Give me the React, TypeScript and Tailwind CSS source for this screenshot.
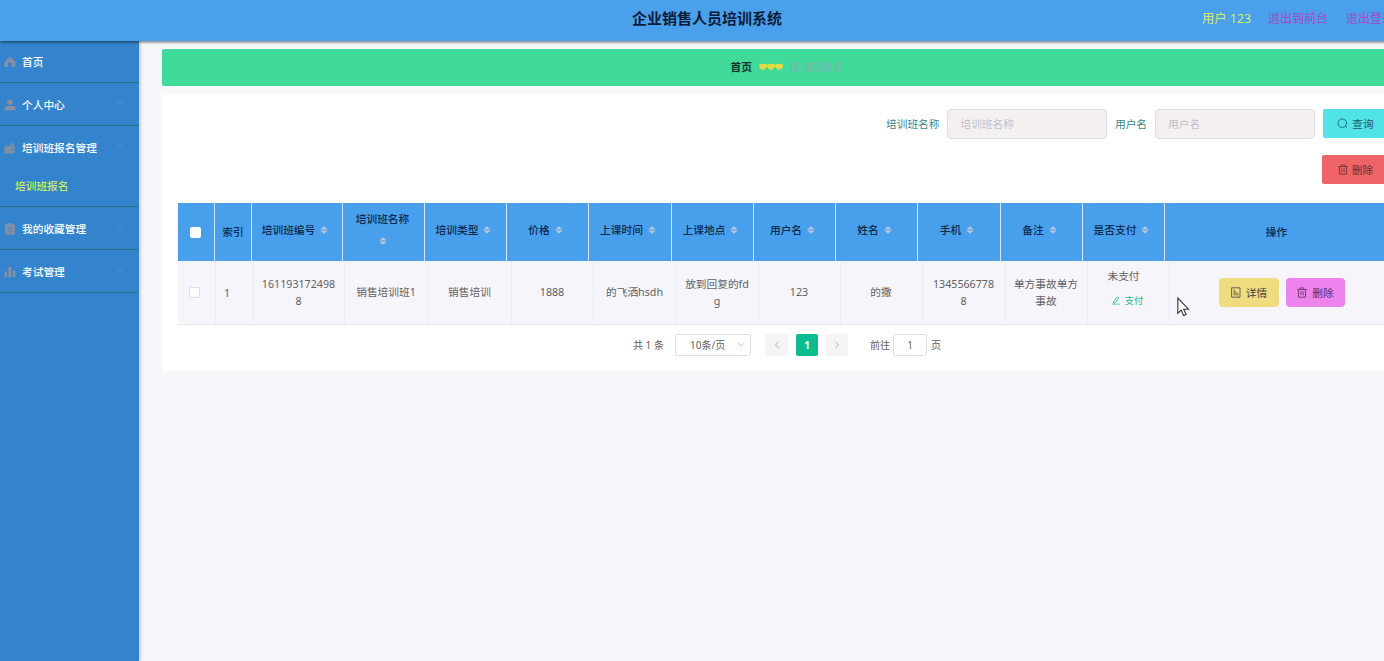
import type { ReactNode } from "react";
import clsx from "clsx";

const svgBase = { fill: "none", stroke: "currentColor", strokeLinecap: "round", strokeLinejoin: "round" } as const;

function HomeIcon() {
    return (
        <svg width="12" height="12" viewBox="0 0 12 12" fill="currentColor">
            <path d="M6 .8 11.5 6v4.2c0 .5-.3.8-.8.8H8V8.2C8 7 7.200 6.300 6 6.300S4 7 4 8.200V11H1.300c-.5 0-.8-.3-.8-.8V6z" />
        </svg>
    );
}

function UserIcon() {
    return (
        <svg width="12" height="12" viewBox="0 0 12 12" fill="currentColor">
            <circle cx="6" cy="3.200" r="2.700" />
            <path d="M.6 11.200V9.600c0-1.600 1.200-2.500 2.600-2.500h5.600c1.400 0 2.600.9 2.600 2.500v1.600z" />
        </svg>
    );
}

function WalletIcon() {
    return (
        <svg width="12" height="12" viewBox="0 0 12 12" fill="currentColor">
            <path d="M4.500 3.600 9.300.8l1.200 2.100-1.300.7zM.5 4.200h10.200v2.200H8.400a1.200 1.200 0 0 0 0 2.400h2.300v2.500H.5z" />
            <rect x="8.400" y="7" width="2.800" height="1.200" />
        </svg>
    );
}

function OrderIcon() {
    return (
        <svg width="12" height="12" viewBox="0 0 12 12">
            <path d="M1.200 1.300h9.600v10.500H1.200z" fill="currentColor" />
            <path d="M4 .3h4v2H4z" fill="currentColor" />
            <path d="M3.500 4.800h5M3.500 6.800h5M3.500 8.800h5" stroke="#3384cc" strokeWidth=".6" />
        </svg>
    );
}

function BarsIcon() {
    return (
        <svg width="12" height="12" viewBox="0 0 12 12" fill="currentColor">
            <path d="M.5 5.500h2.600V11H.5zM4.500 1h2.800v10H4.500zM8.700 4h2.600v7H8.700z" />
        </svg>
    );
}

function Chevron({ dir, size = 8 }: { dir: "up" | "down" | "left" | "right"; size?: number }) {
    const paths = {
        up: "M1.500 5.500l2.500-2.500 2.500 2.500",
        down: "M1.500 2.500l2.500 2.500 2.500-2.500",
        left: "M5.500 1l-3 3 3 3",
        right: "M2.500 1l3 3-3 3",
    };
    return (
        <svg width={size} height={size} viewBox="0 0 8 8" strokeWidth="0.9" {...svgBase}>
            <path d={paths[dir]} />
        </svg>
    );
}

function SearchIcon() {
    return (
        <svg width="11" height="11" viewBox="0 0 11 11" strokeWidth=".8" {...svgBase}>
            <circle cx="5.300" cy="5.200" r="4.300" />
            <path d="M8.400 8.400l1.300 1.200" />
        </svg>
    );
}

function TrashIcon() {
    return (
        <svg width="10" height="11" viewBox="0 0 10 11" strokeWidth=".8" {...svgBase}>
            <path d="M.7 2.500h8.600M3.200 2.300V.9h3.600v1.400M1.500 2.700v7.500h7V2.700M3.900 4.700v3.200M6.100 4.700v3.200" />
        </svg>
    );
}

function DetailIcon() {
    return (
        <svg width="10" height="11" viewBox="0 0 10 11" strokeWidth=".8" {...svgBase}>
            <path d="M1 .8h8v9.400H1zM3.200 3v5M5 5v3M6.800 6.500V8" />
        </svg>
    );
}

function EditIcon() {
    return (
        <svg width="9" height="9" viewBox="0 0 9 9" strokeWidth=".8" {...svgBase}>
            <path d="M2 5.300 5.200 1l1.600 1.200L3.600 6.600 1.800 7.200zM1 8.200h3M5.500 8.200h2" />
        </svg>
    );
}

function SortIcon() {
    return (
        <svg width="8" height="8" viewBox="0 0 8 8" fill="#b9c8da">
            <path d="M4 .2 7.700 3.600H.3zM4 7.800.3 4.400h7.400z" />
        </svg>
    );
}

function Hearts() {
    return (
        <svg width="24" height="8" viewBox="0 0 24 8" fill="#e6da40">
            {[0, 8, 16].map((x) => (
                <path key={x} transform={`translate(${x} 0)`} d="M4 7.200C2 6 0 4.600 0 2.700 0 .5 3 .3 4 1.500 5 .3 8 .5 8 2.700 8 4.600 6 6 4 7.200z" />
            ))}
        </svg>
    );
}

const menu: { label: string; icon: ReactNode; arrow?: "up" | "down"; children?: string[] }[] = [
    { label: "首页", icon: <HomeIcon /> },
    { label: "个人中心", icon: <UserIcon />, arrow: "down" },
    { label: "培训班报名管理", icon: <WalletIcon />, arrow: "up", children: ["培训班报名"] },
    { label: "我的收藏管理", icon: <OrderIcon />, arrow: "down" },
    { label: "考试管理", icon: <BarsIcon />, arrow: "down" },
];

const columns = [
    "培训班编号",
    "培训班名称",
    "培训类型",
    "价格",
    "上课时间",
    "上课地点",
    "用户名",
    "姓名",
    "手机",
    "备注",
    "是否支付",
];

const cells = [
    ["161193172498", "8"],
    ["销售培训班1"],
    ["销售培训"],
    ["1888"],
    ["的飞洒hsdh"],
    ["放到回复的fd", "g"],
    ["123"],
    ["的撒"],
    ["1345566778", "8"],
    ["单方事故单方", "事故"],
];

function Sidebar() {
    return (
        <aside className="w-[139px] shrink-0 bg-[#3384cc] shadow-[1px_0_4px_rgba(0,0,0,0.25)]">
            {menu.map((item, idx) => (
                <div key={item.label} className="border-b border-[#2b7186]">
                    <div
                        className={clsx(
                            "flex items-center pl-1 pr-[15px] text-white font-medium",
                            idx === 0 ? "h-[41px]" : "h-[42px] pt-px"
                        )}
                    >
                        <span className="mr-1.5 text-[#8790a0]">{item.icon}</span>
                        <span className="flex-1">{item.label}</span>
                        {item.arrow && (
                            <span className="pb-1 text-[#5f93c4]">
                                <Chevron dir={item.arrow} />
                            </span>
                        )}
                    </div>
                    {item.children?.map((child) => (
                        <div key={child} className="flex h-[38px] items-center pl-[15px] pb-0.5 font-medium text-[#cdec5c]">
                            {child}
                        </div>
                    ))}
                </div>
            ))}
        </aside>
    );
}

function Field({ label }: { label: string }) {
    return (
        <label className="flex items-center gap-2 text-[#3c8585]">
            {label}
            <input
                placeholder={label}
                className="h-[30px] w-[160px] rounded border border-[#e0e0e8] bg-[#f5f0f0] px-3 placeholder:text-[#bfbfca]"
            />
        </label>
    );
}

function DataTable() {
    return (
        <div className="mt-[19px] w-[1218px]">
            <div className="grid h-[58px] grid-cols-[37px_37px_91px_82px_82px_82px_83px_82px_82px_82px_83px_82px_82px_223px] bg-[#489feb] font-medium text-[#0c2a4c]">
                <div className="flex items-center justify-center border-r border-[#d5e6f7] pr-0.5">
                    <span className="h-[11px] w-[11px] rounded-xs bg-white" />
                </div>
                <div className="flex items-center justify-center border-r border-[#d5e6f7]">索引</div>
                {columns.map((col) => (
                    <div
                        key={col}
                        className="flex flex-wrap content-center items-center justify-center gap-x-[5px] border-r border-[#d5e6f7] pl-1.5 pr-2.5 pb-1 leading-[21px]"
                    >
                        {col === "培训班名称" ? (
                            <>
                                <span className="-mr-0.5 w-full text-center">{col}</span>
                                <span className="flex h-[21px] items-center pl-0.5">
                                    <SortIcon />
                                </span>
                            </>
                        ) : (
                            <>
                                {col}
                                <SortIcon />
                            </>
                        )}
                    </div>
                ))}
                <div className="flex items-center justify-center">操作</div>
            </div>
            <div className="grid h-[64px] grid-cols-[38px_38px_91px_84px_83px_82px_83px_82px_82px_82px_83px_82px_82px_226px] border-b border-[#e6e9f2] bg-[#f5f5fb] text-[#606266]">
                <div className="flex items-center justify-center border-r border-[#ebedf5] pr-1">
                    <span className="h-[11px] w-[11px] rounded-xs border border-[#dcdfe6] bg-white" />
                </div>
                <div className="flex items-center border-r border-[#ebedf5] pl-2">1</div>
                {cells.map((lines, idx) => (
                    <div key={idx} className="flex flex-col items-center justify-center whitespace-nowrap border-r border-[#ebedf5] pr-px leading-[17px]">
                        {lines.map((line) => (
                            <span key={line}>{line}</span>
                        ))}
                    </div>
                ))}
                <div className="flex flex-col items-center border-r border-[#ebedf5] pt-[7px] pr-2.5 leading-[17px]">
                    <span>未支付</span>
                    <span className="mt-[7px] flex items-center gap-1 pl-2 text-[9.300px] text-[#1cbd8c]">
                        <EditIcon />
                        支付
                    </span>
                </div>
                <div className="flex items-center justify-center gap-[7px] pr-0.5">
                    <button className="flex h-[29px] w-[60px] items-center justify-center gap-[5px] rounded bg-[#f0dc80] text-[#40423c]">
                        <DetailIcon />
                        详情
                    </button>
                    <button className="flex h-[29px] w-[59px] items-center justify-center gap-[5px] rounded bg-[#ee83ee] text-[#5a3062]">
                        <TrashIcon />
                        删除
                    </button>
                </div>
            </div>
        </div>
    );
}

function Pagination() {
    return (
        <div className="mt-[9px] flex h-[22px] items-center pl-[455px] text-[10px] text-[#606266]">
            <span className="w-[42px]">共 1 条</span>
            <div className="flex h-[22px] w-[76px] items-center rounded-xs border border-[#dcdfe6] pl-3.5 pr-[5px]">
                <span className="flex-1">10条/页</span>
                <span className="text-[#c0c4cc]">
                    <Chevron dir="down" />
                </span>
            </div>
            <button className="ml-3.5 flex h-[22px] w-[23px] items-center justify-center rounded-xs bg-[#f4f4f5] text-[#a8abb2]">
                <Chevron dir="left" />
            </button>
            <button className="ml-2 h-[22px] w-[22px] rounded-xs bg-[#0bbd8e] font-bold text-white">1</button>
            <button className="ml-2 flex h-[22px] w-[22px] items-center justify-center rounded-xs bg-[#f4f4f5] text-[#a8abb2]">
                <Chevron dir="right" />
            </button>
            <span className="ml-[22px] mr-[3px]">前往</span>
            <span className="flex h-[22px] w-[34px] items-center justify-center rounded-xs border border-[#dcdfe6]">1</span>
            <span className="ml-1">页</span>
        </div>
    );
}

export default function App() {
    return (
        <div className="relative flex h-[661px] w-[1384px] flex-col overflow-hidden bg-[#f6f8fc] font-['Noto_Sans','Noto_Sans_CJK_SC',sans-serif] text-[10.700px] leading-4">
            <header className="z-10 grid h-[41px] w-[1414px] shrink-0 grid-cols-[1fr_auto_1fr] items-center bg-[#4aa0eb] pb-1 shadow-[0_1px_3px_rgba(0,0,0,0.6)]">
                <span />
                <h1 className="pb-0.5 text-[15px] font-bold text-[#0a1c38]">企业销售人员培训系统</h1>
                <div className="flex items-center justify-end pr-5 text-[12px]">
                    <span className="mr-[17px] text-[12.300px] text-[#d3ee6a]">用户 123</span>
                    <span className="mr-[18px] text-[#a04cc4]">退出到前台</span>
                    <span className="text-[#a04cc4]">退出登录</span>
                </div>
            </header>
            <div className="flex min-h-0 flex-1">
                <Sidebar />
                <main className="w-[1273px] shrink-0 pl-[23px] pt-2">
                    <nav className="flex h-[37px] w-[1250px] items-center justify-center gap-[7px] rounded-xs bg-[#40db9a] pb-0.5">
                        <span className="font-bold text-[#12302a]">首页</span>
                        <Hearts />
                        <span className="text-[#7fb0b0]">培训班报名</span>
                    </nav>
                    <section className="mt-2 h-[277px] w-[1250px] bg-white px-4 pt-[15px]">
                        <div className="flex gap-[7.500px] pl-[708px]">
                            <Field label="培训班名称" />
                            <Field label="用户名" />
                            <button className="flex h-[29px] w-[68px] items-center justify-center gap-1 rounded-xs bg-[#50e3e8] pr-0.5 text-[#245660]">
                                <SearchIcon />
                                查询
                            </button>
                        </div>
                        <div className="mt-4 flex pl-[1144px]">
                            <button className="flex h-[29px] w-[68px] items-center justify-center gap-1 rounded-xs bg-[#ef6567] pr-px text-[#6a2c34]">
                                <TrashIcon />
                                删除
                            </button>
                        </div>
                        <DataTable />
                        <Pagination />
                    </section>
                </main>
            </div>
            <svg className="absolute left-[1177px] top-[297px]" width="13" height="20" viewBox="0 0 13 20">
                <path d="M.8 1v15.200l3.400-3.100 2.400 5.500 2.500-1.100-2.400-5.300h4.700z" fill="#fff" stroke="#333" strokeWidth="1.100" />
            </svg>
        </div>
    );
}
